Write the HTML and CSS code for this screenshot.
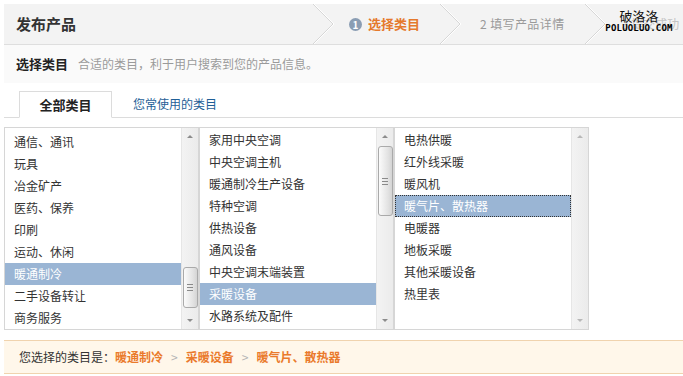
FILE: index.html
```html
<!DOCTYPE html>
<html lang="zh-CN">
<head>
<meta charset="utf-8">
<title>发布产品</title>
<link rel="stylesheet" href="styles.css">
</head>
<body>
<div class="page">
  <div class="head">
    <div class="title">发布产品</div>
    <svg class="chev" viewBox="0 0 22 40" width="22" height="40"><polyline points="1,0 21,20 1,40" fill="none" stroke="#ffffff" stroke-width="1"/><polyline points="0,0 20,20 0,40" fill="none" stroke="#d6d6d6" stroke-width="1"/></svg>
    <div class="step s1"><span class="num">1</span>选择类目</div>
    <svg class="chev" viewBox="0 0 22 40" width="22" height="40"><polyline points="1,0 21,20 1,40" fill="none" stroke="#ffffff" stroke-width="1"/><polyline points="0,0 20,20 0,40" fill="none" stroke="#d6d6d6" stroke-width="1"/></svg>
    <div class="step s2">2 填写产品详情</div>
    <svg class="chev" viewBox="0 0 22 40" width="22" height="40"><polyline points="1,0 21,20 1,40" fill="none" stroke="#ffffff" stroke-width="1"/><polyline points="0,0 20,20 0,40" fill="none" stroke="#d6d6d6" stroke-width="1"/></svg>
    <div class="step s3">3 提交成功</div>
    <div class="wm"><span class="wm-cn">破洛洛</span><span class="wm-en">POLUOLUO.COM</span></div>
  </div>

  <div class="intro"><b>选择类目</b><span class="desc">合适的类目，利于用户搜索到您的产品信息。</span></div>

  <div class="tabs">
    <div class="tab active">全部类目</div>
    <div class="tab other">您常使用的类目</div>
  </div>

  <div class="lists">
    <div class="list">
      <div class="items pad3">
        <div class="item">通信、通讯</div>
        <div class="item">玩具</div>
        <div class="item">冶金矿产</div>
        <div class="item">医药、保养</div>
        <div class="item">印刷</div>
        <div class="item">运动、休闲</div>
        <div class="item sel">暖通制冷</div>
        <div class="item">二手设备转让</div>
        <div class="item">商务服务</div>
      </div>
      <div class="sb">
        <div class="arr up"></div>
        <div class="thumb t1"><i></i><i></i><i></i></div>
        <div class="arr down"></div>
      </div>
    </div>
    <div class="list">
      <div class="items pad1">
        <div class="item">家用中央空调</div>
        <div class="item">中央空调主机</div>
        <div class="item">暖通制冷生产设备</div>
        <div class="item">特种空调</div>
        <div class="item">供热设备</div>
        <div class="item">通风设备</div>
        <div class="item">中央空调末端装置</div>
        <div class="item sel">采暖设备</div>
        <div class="item">水路系统及配件</div>
      </div>
      <div class="sb">
        <div class="arr up"></div>
        <div class="thumb t2"><i></i><i></i><i></i></div>
        <div class="arr down"></div>
      </div>
    </div>
    <div class="list">
      <div class="items pad1">
        <div class="item">电热供暖</div>
        <div class="item">红外线采暖</div>
        <div class="item">暖风机</div>
        <div class="item sel focus">暖气片、散热器</div>
        <div class="item">电暖器</div>
        <div class="item">地板采暖</div>
        <div class="item">其他采暖设备</div>
        <div class="item">热里表</div>
      </div>
      <div class="sb off">
        <div class="arr up"></div>
        <div class="arr down"></div>
      </div>
    </div>
  </div>

  <div class="picked">您选择的类目是：<b>暖通制冷</b><span class="gt">&gt;</span><b>采暖设备</b><span class="gt">&gt;</span><b>暖气片、散热器</b></div>
</div>
</body>
</html>
```

FILE: styles.css
```css
html, body {
  margin: 0;
  padding: 0;
  background: #ffffff;
}
body {
  padding: 4px 0 0 4px;
  font-family: "Noto Sans CJK SC", "Liberation Sans", sans-serif;
  font-size: 12px;
  color: #333333;
  overflow: hidden;
}
.page {
  width: 679px;
}

/* header */
.head {
  position: relative;
  display: flex;
  align-items: center;
  height: 40px;
  background: #f3f3f3;
  border-bottom: 1px solid #dedede;
}
.title {
  width: 297px;
  padding-left: 12px;
  font-size: 15px;
  font-weight: bold;
  color: #333333;
  line-height: 40px;
}
.chev {
  display: block;
  flex: none;
}
.step {
  line-height: 40px;
  white-space: nowrap;
  display: flex;
  align-items: center;
}
.s1 {
  width: 91px;
  padding-left: 14px;
  font-size: 13px;
  font-weight: bold;
  color: #e5792d;
}
.num {
  display: inline-block;
  width: 13px;
  height: 13px;
  border-radius: 50%;
  background: #8a9db3;
  color: #ffffff;
  font-size: 10px;
  font-weight: bold;
  line-height: 13px;
  text-align: center;
  margin-right: 6px;
}
.s2 {
  width: 105px;
  padding-left: 18px;
  font-size: 12px;
  color: #9a9a9a;
  letter-spacing: 0.4px;
}
.s3 {
  padding-left: 15px;
  font-size: 12px;
  color: #c4c4c4;
}
.wm {
  position: absolute;
  left: 600px;
  top: 5px;
  width: 70px;
  display: flex;
  flex-direction: column;
  align-items: center;
}
.wm-cn {
  font-size: 13px;
  line-height: 14px;
  color: #111111;
}
.wm-en {
  font-family: "DejaVu Sans Mono", monospace;
  font-size: 9px;
  line-height: 10px;
  font-weight: bold;
  color: #000000;
  letter-spacing: 0.2px;
}

/* intro */
.intro {
  height: 38px;
  line-height: 38px;
  padding-left: 12px;
  background: #fafafa;
}
.intro b {
  font-size: 13px;
  color: #222222;
}
.desc {
  margin-left: 10px;
  color: #9a9a9a;
  font-size: 12px;
}

/* tabs */
.tabs {
  margin-top: 8px;
  height: 26px;
  border-bottom: 1px solid #dcdcdc;
  display: flex;
  padding-left: 15px;
}
.tab {
  box-sizing: border-box;
  height: 27px;
  line-height: 26px;
}
.tab.active {
  width: 93px;
  border: 1px solid #dcdcdc;
  border-bottom: 1px solid #ffffff;
  background: #ffffff;
  text-align: center;
  font-size: 13px;
  font-weight: bold;
  color: #222222;
}
.tab.other {
  margin-left: 21px;
  font-size: 12px;
  color: #1f5f97;
}

/* lists */
.lists {
  margin-top: 9px;
  display: flex;
}
.list {
  box-sizing: border-box;
  width: 195px;
  height: 203px;
  border: 1px solid #d6d6d6;
  display: flex;
  background: #ffffff;
}
.items {
  flex: 1;
  overflow: hidden;
}
.pad3 { padding-top: 3px; }
.pad1 { padding-top: 1px; }
.item {
  box-sizing: border-box;
  height: 22px;
  line-height: 21px;
  padding-left: 9px;
  font-size: 12px;
  color: #333333;
  white-space: nowrap;
}
.item.sel {
  background: #9ab5d4;
  color: #ffffff;
}
.item.focus {
  outline: 1px dotted #333333;
  outline-offset: -1px;
}

/* scrollbar */
.sb {
  width: 16px;
  flex: none;
  display: flex;
  flex-direction: column;
  align-items: center;
  background: linear-gradient(to right, #f3f3f3, #ebebeb);
  border-left: 1px solid #e6e6e6;
}
.arr {
  width: 0;
  height: 0;
  border-left: 3px solid transparent;
  border-right: 3px solid transparent;
}
.arr.up {
  margin-top: 7px;
  border-bottom: 3px solid #8c8c8c;
}
.arr.down {
  margin-top: auto;
  margin-bottom: 7px;
  border-top: 3px solid #8c8c8c;
}
.sb.off .arr.up { border-bottom-color: #b8b8b8; }
.sb.off .arr.down { border-top-color: #b8b8b8; }
.thumb {
  box-sizing: border-box;
  width: 15px;
  border: 1px solid #aaaaaa;
  border-radius: 3px;
  background: linear-gradient(to right, #fbfbfb, #e2e2e2 70%, #d4d4d4);
  display: flex;
  flex-direction: column;
  align-items: center;
  justify-content: center;
  gap: 2px;
}
.thumb i {
  display: block;
  width: 6px;
  height: 1px;
  background: #8a8a8a;
}
.t1 {
  margin-top: 129px;
  height: 41px;
}
.t2 {
  margin-top: 8px;
  height: 70px;
}

/* picked bar */
.picked {
  box-sizing: border-box;
  margin-top: 10px;
  height: 34px;
  line-height: 32px;
  padding-left: 15px;
  background: #fff7ea;
  border-top: 1px solid #f0d3ae;
  border-bottom: 1px solid #f0d3ae;
  font-size: 12px;
  color: #333333;
}
.picked b {
  color: #ea7a2c;
  font-size: 12px;
}
.gt {
  color: #b5b5b5;
  margin: 0 8px;
}
```
